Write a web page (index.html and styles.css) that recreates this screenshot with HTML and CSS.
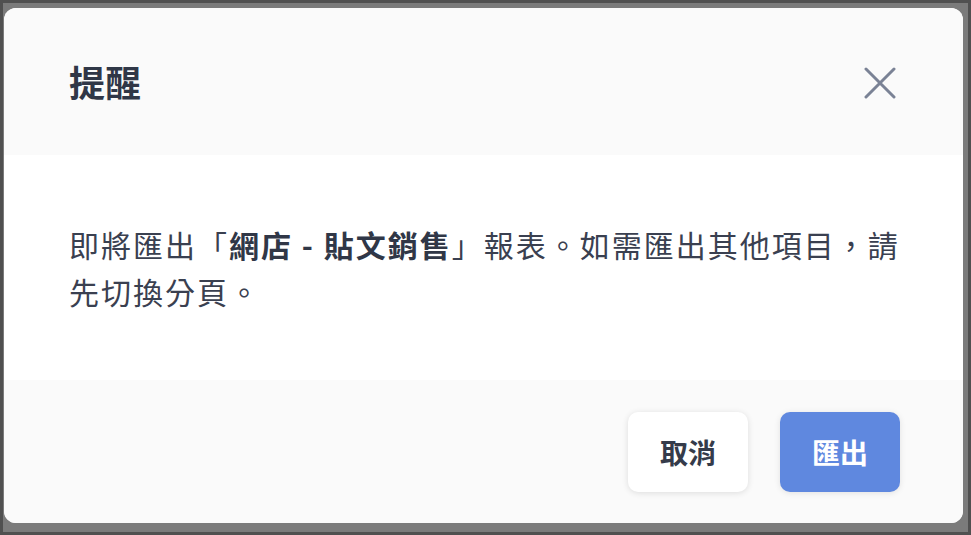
FILE: index.html
```html
<!DOCTYPE html>
<html lang="zh-Hant">
<head>
  <title>提醒</title>
  <link rel="stylesheet" href="styles.css">
</head>
<body>

  <div class="frame">
    <div class="backdrop">
      <div class="modal">
        <div class="modal-header">
          <h2 class="modal-title">提醒</h2>
          <button class="close" aria-label="關閉">
            <svg width="32" height="32" viewBox="0 0 32 32">
              <path d="M2 2 L30 30 M30 2 L2 30" stroke="#7a8295" stroke-width="3" stroke-linecap="round" fill="none"/>
            </svg>
          </button>
        </div>

        <div class="modal-body">
          <p>即將匯出「<strong>網店 - 貼文銷售</strong>」報表。如需匯出其他項目，請先切換分頁。</p>
        </div>

        <div class="modal-footer">
          <button class="btn btn-cancel">取消</button>
          <button class="btn btn-primary">匯出</button>
        </div>
      </div>
    </div>
  </div>

</body>
</html>
```

FILE: styles.css
```css
* {
  box-sizing: border-box;
}

body {
  margin: 0;
  font-family: "Noto Sans CJK TC", "Noto Sans", sans-serif;
  color: #3a4050;
}

.frame {
  height: 535px;
  padding: 3px;
  background-color: #505050;
}

.backdrop {
  height: 100%;
  padding: 5px 4px 0 1px;
  background-color: #7b7b7b;
}

.modal {
  width: 959px;
  height: 515px;
  border-radius: 12px;
  overflow: hidden;
  display: flex;
  flex-direction: column;
  background-color: #fff;
}

.modal-header {
  height: 147px;
  padding: 0 67px 0 65px;
  display: flex;
  justify-content: space-between;
  align-items: center;
  background-color: #fafafa;
}

.modal-title {
  margin: 0;
  font-size: 36px;
  line-height: 49px;
  font-weight: 700;
  color: #303747;
}

.close {
  width: 32px;
  height: 32px;
  padding: 0;
  border: none;
  background: none;
  cursor: pointer;
  display: flex;
  margin-top: 2px;
}

.modal-body {
  height: 225px;
  padding: 0 48px 0 65px;
  display: flex;
  align-items: center;
}

.modal-body p {
  margin: 0;
  font-size: 30px;
  line-height: 47px;
  letter-spacing: 2px;
}

.modal-body strong {
  font-weight: 700;
  color: #303747;
}

.modal-footer {
  flex: 1;
  padding: 32px 63px 0 0;
  display: flex;
  justify-content: flex-end;
  align-items: flex-start;
  gap: 32px;
  background-color: #fafafa;
}

.btn {
  width: 120px;
  height: 80px;
  border: none;
  border-radius: 10px;
  font-family: inherit;
  font-size: 28px;
  font-weight: 700;
  cursor: pointer;
}

.btn-cancel {
  background-color: #fff;
  color: #353b4a;
  box-shadow: 0 1px 6px rgba(0, 0, 0, 0.12);
}

.btn-primary {
  background-color: #5f88df;
  color: #fff;
  box-shadow: 0 1px 6px rgba(0, 0, 0, 0.1);
}
```
